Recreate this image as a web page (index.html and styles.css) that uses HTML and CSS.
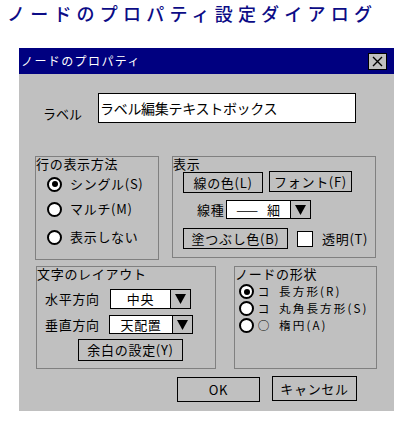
FILE: index.html
```html
<!DOCTYPE html>
<html lang="ja">
<head>
<meta charset="utf-8">
<title>ノードのプロパティ設定ダイアログ</title>
<link rel="stylesheet" href="styles.css">
</head>
<body>
<header class="page-title">ノードのプロパティ設定ダイアログ</header>
<div class="dialog">
  <div class="titlebar">
    <span class="title-text">ノードのプロパティ</span>
    <span class="close-btn"><svg width="11" height="11" viewBox="0 0 11 11"><path d="M1 1L10 10M10 1L1 10" stroke="#000" stroke-width="1.4" fill="none"/></svg></span>
  </div>
  <div class="dialog-body">
    <div class="label-row">
      <span class="label-text">ラベル</span>
      <div class="textbox">ラベル編集テキストボックス</div>
    </div>

    <div class="group-row top-row">
      <div class="group group-line">
        <div class="legend">行の表示方法</div>
        <div class="radio-row r1"><span class="radio checked"></span><span>シングル(S)</span></div>
        <div class="radio-row r2"><span class="radio"></span><span>マルチ(M)</span></div>
        <div class="radio-row r3"><span class="radio"></span><span>表示しない</span></div>
      </div>
      <div class="group group-display">
        <div class="legend">表示</div>
        <div class="disp-row row-a">
          <div class="btn btn-linecolor">線の色(L)</div>
          <div class="btn btn-font">フォント(F)</div>
        </div>
        <div class="disp-row row-b">
          <span class="field-label linetype-label">線種</span>
          <div class="dropdown dd-linetype">
            <div class="dd-value"><span class="dash">——</span><span>細</span></div>
            <div class="dd-arrow"><svg width="11" height="10" viewBox="0 0 11 10"><polygon points="0,0 11,0 5.5,10" fill="#000"/></svg></div>
          </div>
        </div>
        <div class="disp-row row-c">
          <div class="btn btn-fill">塗つぶし色(B)</div>
          <span class="checkbox"></span>
          <span class="check-label">透明(T)</span>
        </div>
      </div>
    </div>

    <div class="group-row bottom-row">
      <div class="group group-layout">
        <div class="legend">文字のレイアウト</div>
        <div class="layout-row lr1">
          <span class="field-label h-label">水平方向</span>
          <div class="dropdown dd-h">
            <div class="dd-value">中央</div>
            <div class="dd-arrow"><svg width="11" height="10" viewBox="0 0 11 10"><polygon points="0,0 11,0 5.5,10" fill="#000"/></svg></div>
          </div>
        </div>
        <div class="layout-row lr2">
          <span class="field-label v-label">垂直方向</span>
          <div class="dropdown dd-v">
            <div class="dd-value">天配置</div>
            <div class="dd-arrow"><svg width="11" height="10" viewBox="0 0 11 10"><polygon points="0,0 11,0 5.5,10" fill="#000"/></svg></div>
          </div>
        </div>
        <div class="btn btn-margin">余白の設定(Y)</div>
      </div>
      <div class="group group-shape">
        <div class="legend">ノードの形状</div>
        <div class="shape-row s1"><span class="radio checked"></span><span class="shape-icon">コ</span><span class="shape-text">長方形(R)</span></div>
        <div class="shape-row"><span class="radio"></span><span class="shape-icon">コ</span><span class="shape-text">丸角長方形(S)</span></div>
        <div class="shape-row"><span class="radio"></span><span class="shape-icon">○</span><span class="shape-text">楕円(A)</span></div>
      </div>
    </div>

    <div class="action-row">
      <div class="btn btn-ok">OK</div>
      <div class="btn btn-cancel">キャンセル</div>
    </div>
  </div>
</div>
</body>
</html>
```
FILE: styles.css
```css
body {
  margin: 0;
  background: #fff;
  font-family: "Noto Sans CJK JP", "Noto Sans", sans-serif;
  color: #000;
}

.page-title {
  height: 48px;
  box-sizing: border-box;
  padding: 2px 0 0 7px;
  font-size: 18px;
  line-height: 22px;
  letter-spacing: 5.2px;
  color: #0c0c86;
  font-weight: 500;
  white-space: nowrap;
}

.dialog {
  margin-left: 19px;
  width: 375px;
  height: 363px;
  display: flex;
  flex-direction: column;
}

.titlebar {
  height: 26px;
  flex-shrink: 0;
  background: #000080;
  color: #fff;
  display: flex;
  align-items: center;
}

.title-text {
  margin-left: 2px;
  font-size: 12px;
  line-height: 14px;
  letter-spacing: 1.4px;
}

.close-btn {
  margin-left: auto;
  margin-right: 7px;
  width: 19px;
  height: 17px;
  box-sizing: border-box;
  border: 1px solid #000;
  background: #c0c0c0;
  display: flex;
  align-items: center;
  justify-content: center;
}

.dialog-body {
  flex: 1;
  background: #c0c0c0;
  font-size: 13px;
  line-height: 14px;
  letter-spacing: 0.7px;
}

.label-row {
  display: flex;
  align-items: flex-end;
  padding: 19px 0 0 24px;
}

.label-text {
  width: 55px;
  margin-bottom: 2px;
  letter-spacing: 0;
}

.textbox {
  width: 258px;
  height: 30px;
  box-sizing: border-box;
  border: 1px solid #000;
  background: #fff;
  padding-left: 1px;
  display: flex;
  align-items: center;
  font-size: 14px;
  line-height: 16px;
  letter-spacing: -0.3px;
  white-space: nowrap;
}

.group-row {
  display: flex;
  align-items: flex-start;
}

.top-row {
  margin-top: 33px;
  padding-left: 16px;
  gap: 13px;
}

.bottom-row {
  margin-top: 6px;
  padding-left: 17px;
  gap: 18px;
}

.group {
  border: 1px solid #808080;
  box-sizing: border-box;
}

.legend {
  height: 14px;
  white-space: nowrap;
}

/* Line display group */
.group-line {
  width: 124px;
  height: 104px;
}

.radio-row {
  display: flex;
  align-items: center;
  height: 20px;
  line-height: 16px;
  gap: 8px;
  margin-left: 11px;
  white-space: nowrap;
}

.r1 { margin-top: 3px; }
.r2 { margin-top: 5px; }
.r3 { margin-top: 8px; }

.radio {
  width: 15px;
  height: 15px;
  box-sizing: border-box;
  border: 2px solid #000;
  border-radius: 50%;
  background: #fff;
  display: flex;
  align-items: center;
  justify-content: center;
  flex-shrink: 0;
}

.radio.checked::after {
  content: "";
  width: 6px;
  height: 6px;
  border-radius: 50%;
  background: #000;
}

/* Display group */
.group-display {
  width: 204px;
  height: 102px;
}

.disp-row {
  display: flex;
  margin-left: 10px;
}

.row-a { align-items: flex-start; }
.row-b { align-items: center; margin-top: 7px; }
.row-c { align-items: flex-start; margin-top: 9px; }

.btn {
  box-sizing: border-box;
  border: 1px solid #000;
  display: flex;
  align-items: center;
  justify-content: center;
  white-space: nowrap;
}

.btn-linecolor {
  width: 80px;
  height: 21px;
  margin-top: 1px;
}

.btn-font {
  width: 83px;
  height: 21px;
  margin-left: 6px;
}

.field-label {
  white-space: nowrap;
}

.linetype-label {
  width: 29px;
  margin-left: 14px;
}

.dropdown {
  display: flex;
  box-sizing: border-box;
  border: 1px solid #000;
  background: #fff;
}

.dd-value {
  flex: 1;
  display: flex;
  align-items: center;
  justify-content: center;
  white-space: nowrap;
}

.dd-arrow {
  width: 19px;
  border-left: 1px solid #000;
  background: #c0c0c0;
  display: flex;
  align-items: center;
  justify-content: center;
}

.dd-linetype {
  width: 85px;
  height: 19px;
}

.dash {
  margin-right: 9px;
  letter-spacing: 0;
}

.btn-fill {
  width: 105px;
  height: 21px;
}

.checkbox {
  width: 16px;
  height: 16px;
  box-sizing: border-box;
  border: 1px solid #000;
  background: #fff;
  margin: 3px 0 0 9px;
}

.check-label {
  margin-left: 9px;
  line-height: 21px;
  white-space: nowrap;
}

/* Layout group */
.group-layout {
  width: 180px;
  height: 103px;
}

.layout-row {
  display: flex;
  align-items: center;
  margin-left: 8px;
}

.lr1 { margin-top: 8px; }
.lr2 { margin-top: 6px; }

.h-label { width: 65px; }
.v-label { width: 64px; }

.dd-h {
  width: 81px;
  height: 20px;
}

.dd-v {
  width: 84px;
  height: 19px;
}

.btn-margin {
  width: 105px;
  height: 22px;
  margin: 5px 0 0 41px;
}

/* Shape group */
.group-shape {
  width: 143px;
  height: 103px;
}

.shape-row {
  display: flex;
  align-items: center;
  height: 17px;
  font-size: 11.6px;
  line-height: 15px;
  letter-spacing: 2.1px;
  margin-left: 4px;
  white-space: nowrap;
}

.s1 { margin-top: 2px; }

.shape-icon {
  width: 13px;
  margin-left: 3px;
  text-align: center;
  letter-spacing: 0;
  flex-shrink: 0;
}

.shape-text {
  margin-left: 9px;
}

/* Actions */
.action-row {
  display: flex;
  align-items: flex-start;
  margin-top: 7px;
  padding-left: 158px;
  gap: 12px;
}

.btn-ok {
  width: 83px;
  height: 25px;
  margin-top: 1px;
}

.btn-cancel {
  width: 85px;
  height: 25px;
}
```
